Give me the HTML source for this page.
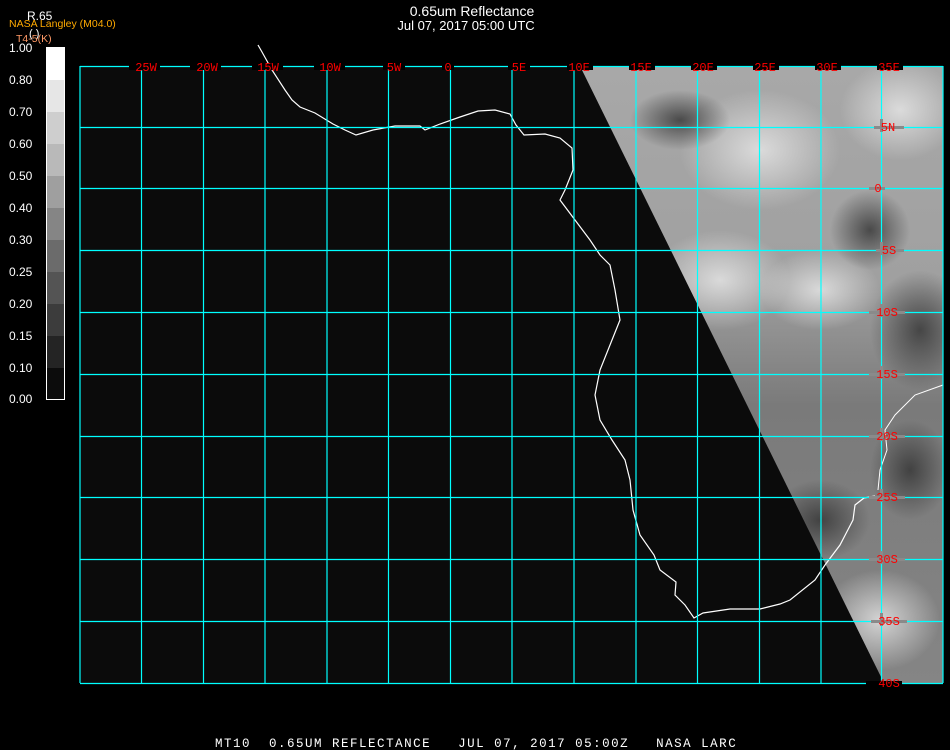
<!DOCTYPE html>
<html><head><meta charset="utf-8"><style>
html,body{margin:0;padding:0;background:#000;width:950px;height:750px;overflow:hidden}
svg{display:block}
.l{font-family:"Liberation Mono",monospace;font-size:12px;fill:#ff0000}
.c{font-family:"Liberation Sans",sans-serif;font-size:12px;fill:#fff}
</style></head><body>
<svg width="950" height="750" viewBox="0 0 950 750" xmlns="http://www.w3.org/2000/svg">
<defs>
<linearGradient id="sat" x1="0" y1="0" x2="0" y2="1">
<stop offset="0" stop-color="#a8a8a8"/><stop offset="0.35" stop-color="#a0a0a0"/><stop offset="0.55" stop-color="#7a7a7a"/><stop offset="1" stop-color="#858585"/>
</linearGradient>
<radialGradient id="w1" cx="0.5" cy="0.5" r="0.5"><stop offset="0" stop-color="#e8e8e8" stop-opacity="0.8"/><stop offset="1" stop-color="#e8e8e8" stop-opacity="0"/></radialGradient>
<radialGradient id="d1" cx="0.5" cy="0.5" r="0.5"><stop offset="0" stop-color="#333" stop-opacity="0.8"/><stop offset="1" stop-color="#333" stop-opacity="0"/></radialGradient>
<clipPath id="cp"><polygon points="580,66 943,66 943,683 884,683"/></clipPath>
</defs>
<rect x="80" y="66" width="863" height="617" fill="#0b0b0b"/>
<polygon points="580,66 943,66 943,683 884,683" fill="url(#sat)"/>
<g clip-path="url(#cp)">
<ellipse cx="760" cy="150" rx="80" ry="60" fill="url(#w1)"/>
<ellipse cx="900" cy="110" rx="60" ry="50" fill="url(#w1)"/>
<ellipse cx="720" cy="280" rx="70" ry="50" fill="url(#w1)"/>
<ellipse cx="820" cy="290" rx="60" ry="40" fill="url(#w1)"/>
<ellipse cx="920" cy="330" rx="50" ry="60" fill="url(#d1)"/>
<ellipse cx="870" cy="230" rx="40" ry="40" fill="url(#d1)"/>
<ellipse cx="680" cy="120" rx="50" ry="30" fill="url(#d1)"/>
<ellipse cx="910" cy="470" rx="40" ry="50" fill="url(#d1)"/>
<ellipse cx="880" cy="620" rx="60" ry="50" fill="url(#w1)"/>
<ellipse cx="820" cy="520" rx="50" ry="40" fill="url(#d1)"/>
</g>
<polyline fill="none" stroke="#fff" stroke-width="1.2" points="258,45 262,52 272,70 285,90 292,100 300,107 315,113 333,124 345,130 356,135 373,130 395,126 420,126 425,130 440,124 460,117 478,111 495,110 510,114 516,125 524,135 545,134 560,138 572,148 573,170 565,190 560,200 575,220 590,240 600,255 610,265 615,290 620,320 610,345 600,370 595,395 600,420 612,440 625,460 630,480 633,510 640,535 654,555 660,570 676,582 675,595 685,605 694,618 703,613 730,609 760,609 768,607 780,604 790,600 815,580 825,565 840,545 853,520 855,505 864,498 875,496"/>
<polyline fill="none" stroke="#fff" stroke-width="1" points="943,385 915,395 895,415 885,430 887,450 880,470 878,490"/>
<g stroke="#00ffff" stroke-width="1.2">
<line x1="80" y1="66.5" x2="943" y2="66.5"/>
<line x1="80" y1="127.5" x2="943" y2="127.5"/>
<line x1="80" y1="188.5" x2="943" y2="188.5"/>
<line x1="80" y1="250.5" x2="943" y2="250.5"/>
<line x1="80" y1="312.5" x2="943" y2="312.5"/>
<line x1="80" y1="374.5" x2="943" y2="374.5"/>
<line x1="80" y1="436.5" x2="943" y2="436.5"/>
<line x1="80" y1="497.5" x2="943" y2="497.5"/>
<line x1="80" y1="559.5" x2="943" y2="559.5"/>
<line x1="80" y1="621.5" x2="943" y2="621.5"/>
<line x1="80" y1="683.5" x2="943" y2="683.5"/>
<line x1="80" y1="66" x2="80" y2="683"/>
<line x1="943" y1="66" x2="943" y2="683"/>
<line x1="141.5" y1="66" x2="141.5" y2="683"/>
<line x1="203.5" y1="66" x2="203.5" y2="683"/>
<line x1="265" y1="66" x2="265" y2="683"/>
<line x1="327" y1="66" x2="327" y2="683"/>
<line x1="388.5" y1="66" x2="388.5" y2="683"/>
<line x1="450.5" y1="66" x2="450.5" y2="683"/>
<line x1="512" y1="66" x2="512" y2="683"/>
<line x1="574" y1="66" x2="574" y2="683"/>
<line x1="636" y1="66" x2="636" y2="683"/>
<line x1="697.5" y1="66" x2="697.5" y2="683"/>
<line x1="759.5" y1="66" x2="759.5" y2="683"/>
<line x1="821" y1="66" x2="821" y2="683"/>
<line x1="881.5" y1="66" x2="881.5" y2="683"/>
</g>
<g fill="#000">
<rect x="129" y="63" width="31" height="7"/><rect x="190" y="63" width="31" height="7"/><rect x="252" y="63" width="31" height="7"/>
<rect x="314" y="63" width="31" height="7"/><rect x="383" y="63" width="22" height="7"/><rect x="442" y="63" width="12" height="7"/>
<rect x="508" y="63" width="22" height="7"/><rect x="567" y="63" width="26" height="7"/><rect x="629" y="63" width="26" height="7"/>
<rect x="691" y="63" width="26" height="7"/><rect x="753" y="63" width="26" height="7"/><rect x="815" y="63" width="26" height="7"/><rect x="877" y="63" width="26" height="7"/>
</g>
<g fill="#8a8a8a">
<rect x="874" y="126" width="30" height="3"/><rect x="869" y="187" width="16" height="3"/><rect x="876" y="249" width="28" height="3"/>
<rect x="869" y="311" width="36" height="3"/><rect x="869" y="373" width="36" height="3"/><rect x="869" y="435" width="36" height="3"/>
<rect x="869" y="496" width="36" height="3"/><rect x="869" y="558" width="36" height="3"/><rect x="871" y="620" width="36" height="3"/>
<rect x="880" y="119" width="3" height="13"/><rect x="880" y="242" width="3" height="13"/><rect x="880" y="304" width="3" height="13"/>
<rect x="880" y="366" width="3" height="13"/><rect x="880" y="428" width="3" height="13"/><rect x="880" y="489" width="3" height="13"/>
<rect x="880" y="551" width="3" height="13"/><rect x="880" y="613" width="3" height="13"/>
</g>
<rect x="866" y="681" width="36" height="4" fill="#000"/>
<g class="l" text-anchor="middle">
<text x="146" y="71">25W</text><text x="207" y="71">20W</text><text x="268" y="71">15W</text><text x="330" y="71">10W</text>
<text x="394" y="71">5W</text><text x="448" y="71">0</text><text x="519" y="71">5E</text><text x="579" y="71">10E</text>
<text x="641" y="71">15E</text><text x="703" y="71">20E</text><text x="765" y="71">25E</text><text x="827" y="71">30E</text><text x="889" y="71">35E</text>
<text x="888" y="131">5N</text><text x="878" y="192">0</text><text x="889" y="254">5S</text><text x="887" y="316">10S</text>
<text x="887" y="378">15S</text><text x="887" y="440">20S</text><text x="887" y="501">25S</text><text x="887" y="563">30S</text>
<text x="889" y="625">35S</text><text x="889" y="687">40S</text>
</g>
<g>
<rect x="46" y="47" width="19" height="33" fill="#fff"/><rect x="46" y="80" width="19" height="32" fill="#e6e6e6"/>
<rect x="46" y="112" width="19" height="32" fill="#cecece"/><rect x="46" y="144" width="19" height="32" fill="#b9b9b9"/>
<rect x="46" y="176" width="19" height="32" fill="#9f9f9f"/><rect x="46" y="208" width="19" height="32" fill="#858585"/>
<rect x="46" y="240" width="19" height="32" fill="#6b6b6b"/><rect x="46" y="272" width="19" height="32" fill="#545454"/>
<rect x="46" y="304" width="19" height="32" fill="#3c3c3c"/><rect x="46" y="336" width="19" height="32" fill="#242424"/>
<rect x="46" y="368" width="19" height="32" fill="#0c0c0c"/>
<rect x="46.5" y="47.5" width="18" height="352" fill="none" stroke="#fff" stroke-width="1"/>
</g>
<g class="c" font-size="13">
<text x="9" y="52">1.00</text><text x="9" y="84">0.80</text><text x="9" y="116">0.70</text><text x="9" y="148">0.60</text>
<text x="9" y="180">0.50</text><text x="9" y="212">0.40</text><text x="9" y="244">0.30</text><text x="9" y="276">0.25</text>
<text x="9" y="308">0.20</text><text x="9" y="340">0.15</text><text x="9" y="372">0.10</text><text x="9" y="403">0.00</text>
</g>
<text x="27" y="20" fill="#fff" font-family="Liberation Sans,sans-serif" font-size="12">R.65</text>
<text x="29" y="37" fill="#fff" font-family="Liberation Sans,sans-serif" font-size="11">( )</text>
<text x="9" y="27" fill="#ffaa00" font-family="Liberation Sans,sans-serif" font-size="10.5">NASA Langley (M04.0)</text>
<text x="16" y="42" fill="#ff9966" font-family="Liberation Sans,sans-serif" font-size="10.5">T4-5(K)</text>
<text x="472" y="16" fill="#fff" text-anchor="middle" font-family="Liberation Sans,sans-serif" font-size="14">0.65um Reflectance</text>
<text x="466" y="30" fill="#fff" text-anchor="middle" font-family="Liberation Sans,sans-serif" font-size="13">Jul 07, 2017 05:00 UTC</text>
<text x="215" y="747" fill="#fff" font-family="Liberation Mono,monospace" font-size="12.5" letter-spacing="1.3" textLength="522" lengthAdjust="spacing" xml:space="preserve">MT10  0.65UM REFLECTANCE   JUL 07, 2017 05:00Z   NASA LARC</text>
</svg>
</body></html>
